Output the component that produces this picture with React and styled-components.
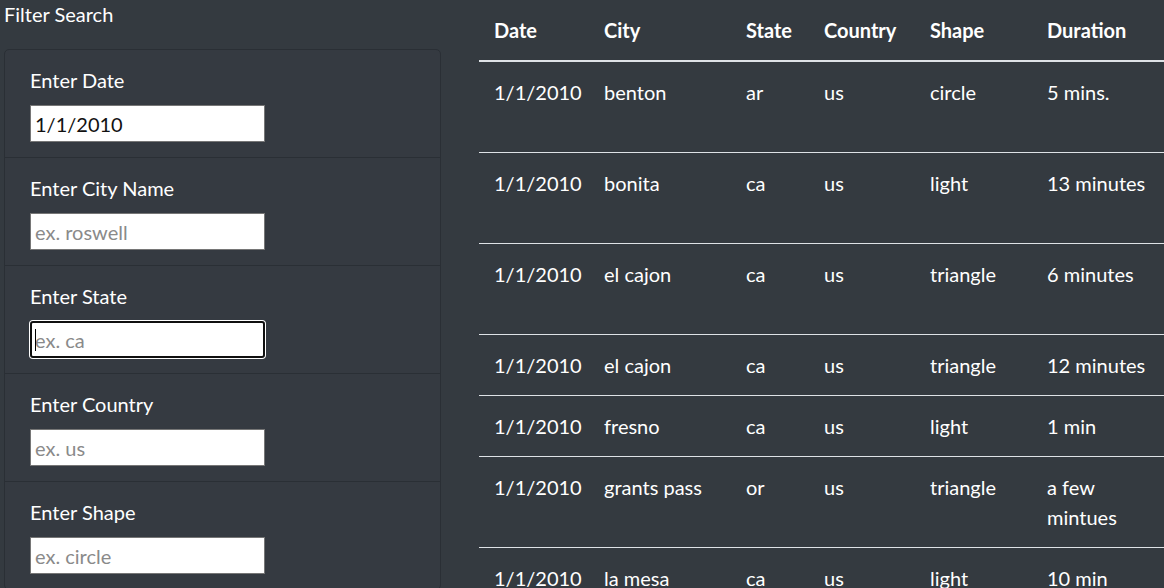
import React from "react";
import styled, { createGlobalStyle } from "styled-components";

const GlobalStyle = createGlobalStyle`
  html, body {
    margin: 0;
    padding: 0;
    overflow: hidden;
    background: #343a40;
  }
  body {
    font-family: "Lato", "Open Sans", sans-serif;
    font-size: 20px;
    line-height: 1.5;
    color: #fff;
  }
  * { box-sizing: border-box; }
`;

const Page = styled.div`
  display: flex;
  align-items: flex-start;
  width: 1164px;
  height: 588px;
  overflow: hidden;
  background: #343a40;
`;

const Sidebar = styled.aside`
  flex: 0 0 437px;
  margin-left: 4px;
`;

const SideTitle = styled.div`
  height: 29px;
  line-height: 28px;
  margin-bottom: 20px;
`;

const FilterCard = styled.ul`
  list-style: none;
  margin: 0;
  padding: 0;
  border: 1px solid #2a2f35;
  border-radius: 5px;
  background: #353a41;
`;

const FilterItem = styled.li`
  padding: 15px 25px;
  border-top: ${(p) => (p.$first ? "none" : "1px solid #2a2f35")};
`;

const Label = styled.label`
  display: block;
  height: 30px;
  line-height: 30px;
  margin-bottom: 10px;
`;

const InputWrap = styled.div`
  position: relative;
  width: 235px;
`;

const Input = styled.input`
  display: block;
  width: 235px;
  height: 37px;
  margin: 0;
  padding: 1px 4px;
  font-family: "Lato", "Open Sans", sans-serif;
  font-size: 20px;
  color: #111;
  background: #fff;
  border: ${(p) => (p.$focused ? "2px solid #101010" : "1px solid #767676")};
  border-radius: ${(p) => (p.$focused ? "3px" : "0")};
  box-shadow: ${(p) => (p.$focused ? "0 0 0 1px #ffffff" : "none")};
  outline: none;
  padding-left: ${(p) => (p.$focused ? "3px" : "4px")};
  &::placeholder {
    color: #8a8a8a;
  }
`;

const Caret = styled.span`
  position: absolute;
  left: 5px;
  top: 8px;
  width: 1px;
  height: 22px;
  background: #000;
`;

const Main = styled.main`
  flex: 1 1 auto;
  margin-left: 38px;
  overflow: hidden;
`;

const Table = styled.table`
  border-collapse: collapse;
  table-layout: fixed;
  width: 1100px;
  color: #fff;
`;

const Th = styled.th`
  text-align: left;
  font-weight: 700;
  padding: 15px;
  line-height: 30px;
  vertical-align: bottom;
  border-bottom: 2px solid #dee2e6;
  white-space: nowrap;
`;

const Td = styled.td`
  padding: 15px;
  line-height: 30px;
  vertical-align: top;
  border-top: 1px solid #dee2e6;
`;

const Row = styled.tr``;

const filters = [
  { label: "Enter Date", value: "1/1/2010", placeholder: "" },
  { label: "Enter City Name", placeholder: "ex. roswell" },
  { label: "Enter State", placeholder: "ex. ca", focused: true },
  { label: "Enter Country", placeholder: "ex. us" },
  { label: "Enter Shape", placeholder: "ex. circle" },
];

const columns = [
  { name: "Date", width: 110 },
  { name: "City", width: 142 },
  { name: "State", width: 78 },
  { name: "Country", width: 106 },
  { name: "Shape", width: 117 },
  { name: "Duration", width: 140 },
  { name: "Comments", width: 407 },
];

const rows = [
  ["1/1/2010", "benton", "ar", "us", "circle", "5 mins.", "4 bright green circles high in the sky going in circles"],
  ["1/1/2010", "bonita", "ca", "us", "light", "13 minutes", "Three bright red lights witnessed floating stationary"],
  ["1/1/2010", "el cajon", "ca", "us", "triangle", "6 minutes", "Strange lights seen moving slowly across the sky"],
  ["1/1/2010", "el cajon", "ca", "us", "triangle", "12 minutes", "Red lights"],
  ["1/1/2010", "fresno", "ca", "us", "light", "1 min", "Orb of light"],
  ["1/1/2010", "grants pass", "or", "us", "triangle", "a few mintues", "Triangle"],
  ["1/1/2010", "la mesa", "ca", "us", "light", "10 min", "Lights"],
];

export default function App() {
  return (
    <>
      <GlobalStyle />
      <Page>
        <Sidebar>
          <SideTitle>Filter Search</SideTitle>
          <FilterCard>
            {filters.map((f, i) => (
              <FilterItem key={f.label} $first={i === 0}>
                <Label>{f.label}</Label>
                <InputWrap>
                  <Input
                    type="text"
                    defaultValue={f.value}
                    placeholder={f.placeholder}
                    $focused={f.focused}
                  />
                  {f.focused && <Caret />}
                </InputWrap>
              </FilterItem>
            ))}
          </FilterCard>
        </Sidebar>
        <Main>
          <Table>
            <colgroup>
              {columns.map((c) => (
                <col key={c.name} style={{ width: c.width }} />
              ))}
            </colgroup>
            <thead>
              <tr>
                {columns.map((c) => (
                  <Th key={c.name}>{c.name}</Th>
                ))}
              </tr>
            </thead>
            <tbody>
              {rows.map((r, i) => (
                <Row key={i}>
                  {r.map((cell, j) => (
                    <Td key={j}>{cell}</Td>
                  ))}
                </Row>
              ))}
            </tbody>
          </Table>
        </Main>
      </Page>
    </>
  );
}
